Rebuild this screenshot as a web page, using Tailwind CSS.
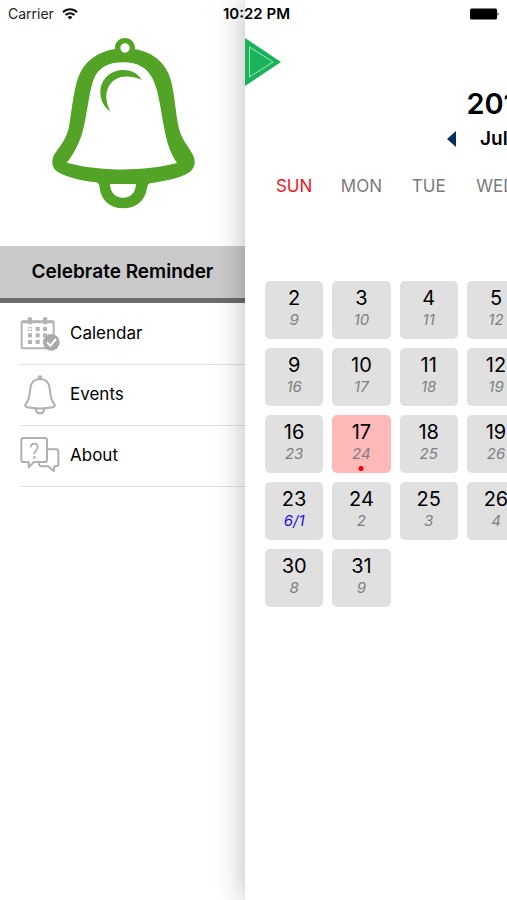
<!DOCTYPE html>
<html lang="en">
<head>
<meta charset="utf-8">
<meta name="viewport" content="width=device-width, initial-scale=1">
<title>Celebrate Reminder</title>
<script src="https://cdn.jsdelivr.net/npm/@tailwindcss/browser@4"></script>
</head>
<body class="relative flex min-h-screen overflow-x-hidden bg-white font-['Inter','Liberation_Sans',sans-serif] text-black">

<!-- Status bar -->
<header class="absolute inset-x-0 top-0 z-20 grid h-7 grid-cols-[1fr_auto_1fr] items-center px-2 text-sm">
  <div class="flex items-center gap-2 text-[#222]">
    <span>Carrier</span>
    <svg class="h-3 w-4" viewBox="0 0 16 12" fill="none" stroke="#111" stroke-width="2" aria-label="Wi-Fi">
      <path d="M1 4.2a10 10 0 0 1 14 0M3.6 7a6.3 6.3 0 0 1 8.8 0"/>
      <path d="M8 11.6 5.6 9.2a3.4 3.4 0 0 1 4.8 0Z" fill="#111" stroke="none"/>
    </svg>
  </div>
  <span class="pl-1.5 text-[15px] font-semibold">10:22 PM</span>
  <svg class="h-3 w-8 justify-self-end" viewBox="0 0 32 12" aria-label="Battery">
    <rect x="3" y="0.5" width="27" height="11" rx="1.5"/>
    <path d="M30.7 4q1.8 2 0 4Z"/>
  </svg>
</header>

<!-- Side menu -->
<aside class="w-[245px] shrink-0">
  <div class="flex h-[246px] justify-center pt-[30px] pl-1">
    <svg class="h-[190px] w-[170px]" viewBox="0 0 510 570" aria-label="Bell">
      <g fill="#52a326">
        <path fill-rule="evenodd" d="M225 57C223 38 238 24 255 24S287 38 285 58C340 66 380 102 393 152C404 195 407 245 414 283C422 328 444 346 460 377C469 397 464 416 445 429C415 447 372 453 330 460Q322 463 321 474C316 512 288 535 250 535C211 535 184 512 179 474Q178 460 169 457C128 452 82 443 52 425C35 414 33 391 43 373C60 347 82 326 88 284C97 230 101 180 115 141C132 94 175 64 225 57ZM250 97C202 97 173 114 160 151C146 192 142 249 130 296C121 334 103 370 80 398C180 425 313 425 411 399C389 368 379 330 372 291C362 241 357 188 340 151C323 112 292 97 250 97ZM210 462C211 488 226 503 249 503C272 503 287 488 288 462ZM255 40A14 14 0 1 0 255 68A14 14 0 1 0 255 40Z"/>
        <path d="M305 149C291 127 270 119 245 120C207 123 181 151 181 188C182 211 192 231 211 244C199 220 195 197 203 176C217 143 253 129 305 149Z"/>
      </g>
    </svg>
  </div>
  <h1 class="border-b-[5px] border-[#6c6c6c] bg-[#cacaca] py-3 text-center text-[19px] leading-7 font-semibold">Celebrate Reminder</h1>
  <nav>
    <ul class="pt-px pl-5 text-[17px]">
      <li class="border-b border-[#e2e2e2]">
        <a href="#calendar" class="flex h-[60px] items-center gap-2.5">
          <svg class="size-10" viewBox="0 0 120 120" aria-hidden="true">
            <rect x="5" y="22" width="96" height="81" rx="3" fill="none" stroke="#b4b4b4" stroke-width="6"/>
            <g fill="#b4b4b4">
              <path d="M5 20H101V28H5Z"/>
              <rect x="23" y="9" width="13" height="22" rx="5"/><rect x="69" y="9" width="13" height="22" rx="5"/>
              <rect x="47" y="39" width="12" height="12"/><rect x="69" y="39" width="12" height="12"/>
              <rect x="24" y="58" width="12" height="12"/><rect x="47" y="58" width="12" height="12"/><rect x="69" y="58" width="12" height="12"/>
              <rect x="24" y="78" width="12" height="12"/><rect x="47" y="78" width="12" height="12"/><rect x="69" y="78" width="12" height="12"/>
            </g>
            <rect x="25" y="40" width="10" height="10" fill="none" stroke="#b4b4b4" stroke-width="2"/>
            <circle cx="94" cy="85" r="25" fill="#aaa"/>
            <path d="m81 85 10 10 17-20" fill="none" stroke="#fff" stroke-width="6"/>
          </svg>
          Calendar
        </a>
      </li>
      <li class="border-b border-[#e2e2e2]">
        <a href="#events" class="flex h-[60px] items-center gap-2.5">
          <svg class="size-10" viewBox="0 0 120 120" fill="none" stroke="#b0b0b0" stroke-width="6" stroke-linejoin="round" aria-hidden="true">
            <path d="M60 12C42 12 33 24 31 40C28 62 29 75 17 87C13 92 17 96 23 97Q60 104 97 97C103 96 107 92 103 87C91 75 92 62 89 40C87 24 78 12 60 12Z"/>
            <circle cx="60" cy="8" r="4"/>
            <path d="M47 101C48 120 72 120 73 101"/>
          </svg>
          Events
        </a>
      </li>
      <li class="border-b border-[#e2e2e2]">
        <a href="#about" class="flex h-[60px] items-center gap-2.5">
          <svg class="size-10" viewBox="0 0 120 120" fill="none" stroke="#b0b0b0" stroke-width="6" stroke-linejoin="round" aria-hidden="true">
            <path d="M82 40H108Q115 40 115 47V84Q115 91 108 91H103L101 105L85 91H65Q58 91 56 82"/>
            <path d="M10 6H74Q81 6 81 13V71Q81 78 74 78H42L26 94L26 78H10Q4 78 4 71V13Q4 6 10 6Z" fill="#fff"/>
            <path d="M32 34Q33 23 43 23T53 34C53 43 43 43 43 54" stroke-width="5"/>
            <circle cx="43" cy="64" r="4" fill="#b0b0b0" stroke="none"/>
          </svg>
          About
        </a>
      </li>
    </ul>
  </nav>
</aside>

<!-- Calendar panel, pushed aside by the open menu -->
<main class="z-10 min-w-0 flex-1 overflow-x-clip bg-white shadow-[0_0_28px_rgba(0,0,0,0.28)]">
  <div class="w-screen pt-[38px]">
    <button class="block" aria-label="Toggle menu">
      <svg class="h-12 w-9" viewBox="0 0 36 48">
        <path d="M0 0 36 24 0 48Z" fill="#1bb25c"/>
        <path d="M4.500 9V39L28 24Z" fill="none" stroke="#9fe6bd" stroke-width="1"/>
      </svg>
    </button>
    <div class="flex flex-col items-center pl-0.5">
      <p class="text-[29px] leading-9 font-semibold">2017</p>
      <div class="flex h-[34px] items-center gap-6">
        <button aria-label="Previous month"><svg class="h-4 w-[9px]" viewBox="0 0 9 16"><path d="M9 0V16L0 8Z" fill="#04305f"/></svg></button>
        <h2 class="text-[19px] font-semibold">July</h2>
        <button aria-label="Next month"><svg class="h-4 w-[9px]" viewBox="0 0 9 16"><path d="M0 0V16L9 8Z" fill="#04305f"/></svg></button>
      </div>
    </div>
    <div class="pr-4 pl-[11px]">
      <table class="w-full table-fixed border-separate border-spacing-[9px] text-center">
        <thead>
          <tr class="h-10 text-[17px] text-[#7b7b7b] [&>th]:p-0 [&>th]:pt-1 [&>th]:font-normal">
            <th scope="col" class="text-[#f0141e]">SUN</th><th scope="col">MON</th><th scope="col">TUE</th><th scope="col">WED</th><th scope="col">THU</th><th scope="col">FRI</th><th scope="col">SAT</th>
          </tr>
        </thead>
        <tbody id="days"></tbody>
      </table>
    </div>
  </div>
</main>

<script>
  // July 2017 starts on a Saturday; the lunar month changes on the 23rd.
  const body = document.getElementById('days');
  const cell = 'relative block h-[58px] w-full rounded-[5px] pb-1 ';
  for (let week = 0; week < 6; week++) {
    const tr = document.createElement('tr');
    for (let d = 0; d < 7; d++) {
      const day = week * 7 + d - 5;
      const td = document.createElement('td');
      td.className = 'h-[58px] p-0';
      if (day >= 1 && day <= 31) {
        const lunar = day === 23 ? '6/1' : day < 23 ? day + 7 : day - 22;
        const marked = day === 17;
        td.innerHTML =
          `<button class="${cell}${marked ? 'bg-[#ffb9b9]' : 'bg-[#e0e0e0]'}">` +
          `<span class="block text-xl leading-6">${day}</span>` +
          `<span class="block text-[15px] leading-5 italic ${day === 23 ? 'text-[#1a10e0]' : 'text-[#808080]'}">${lunar}</span>` +
          (marked ? '<span class="absolute bottom-0.5 left-1/2 size-[5px] -translate-x-1/2 rounded-full bg-[#f00000]"></span>' : '') +
          '</button>';
      }
      tr.append(td);
    }
    body.append(tr);
  }
</script>
</body>
</html>
